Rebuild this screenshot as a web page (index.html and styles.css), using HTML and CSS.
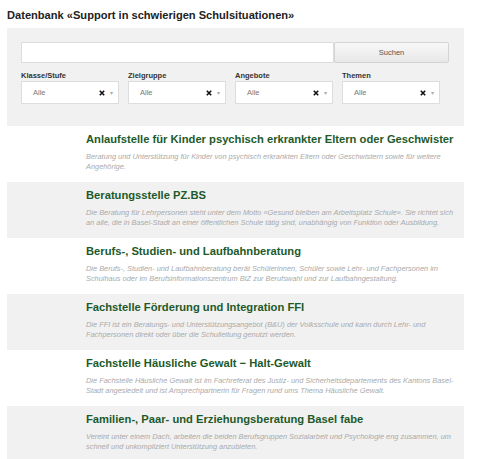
FILE: index.html
```html
<!DOCTYPE html>
<html lang="de">

<head>
    <meta charset="UTF-8">
    <title>Datenbank Support in schwierigen Schulsituationen</title>
    <link rel="stylesheet" href="styles.css">
</head>

<body>
    <div class="page">
        <h1>Datenbank «Support in schwierigen Schulsituationen»</h1>

        <div class="filter-panel">
            <div class="search-row">
                <input type="text" class="search-input">
                <button class="search-btn">Suchen</button>
            </div>

            <div class="filter-row">
                <div class="filter">
                    <label>Klasse/Stufe</label>
                    <div class="select">
                        <span class="value">Alle</span>
                        <svg class="clear" width="6" height="6" viewBox="0 0 6 6"><path d="M0.8 0.8L5.2 5.2M5.2 0.8L0.8 5.2" /></svg>
                        <span class="arrow">&#9662;</span>
                    </div>
                </div>
                <div class="filter">
                    <label>Zielgruppe</label>
                    <div class="select">
                        <span class="value">Alle</span>
                        <svg class="clear" width="6" height="6" viewBox="0 0 6 6"><path d="M0.8 0.8L5.2 5.2M5.2 0.8L0.8 5.2" /></svg>
                        <span class="arrow">&#9662;</span>
                    </div>
                </div>
                <div class="filter">
                    <label>Angebote</label>
                    <div class="select">
                        <span class="value">Alle</span>
                        <svg class="clear" width="6" height="6" viewBox="0 0 6 6"><path d="M0.8 0.8L5.2 5.2M5.2 0.8L0.8 5.2" /></svg>
                        <span class="arrow">&#9662;</span>
                    </div>
                </div>
                <div class="filter">
                    <label>Themen</label>
                    <div class="select">
                        <span class="value">Alle</span>
                        <svg class="clear" width="6" height="6" viewBox="0 0 6 6"><path d="M0.8 0.8L5.2 5.2M5.2 0.8L0.8 5.2" /></svg>
                        <span class="arrow">&#9662;</span>
                    </div>
                </div>
            </div>
        </div>

        <ul class="results">
            <li class="entry">
                <h2>Anlaufstelle für Kinder psychisch erkrankter Eltern oder Geschwister</h2>
                <p>Beratung und Unterstützung für Kinder von psychisch erkrankten Eltern oder Geschwistern sowie für weitere Angehörige.</p>
            </li>
            <li class="entry">
                <h2>Beratungsstelle PZ.BS</h2>
                <p>Die Beratung für Lehrpersonen steht unter dem Motto «Gesund bleiben am Arbeitsplatz Schule». Sie richtet sich an alle, die in Basel-Stadt an einer öffentlichen Schule tätig sind, unabhängig von Funktion oder Ausbildung.</p>
            </li>
            <li class="entry">
                <h2>Berufs-, Studien- und Laufbahnberatung</h2>
                <p>Die Berufs-, Studien- und Laufbahnberatung berät Schülerinnen, Schüler sowie Lehr- und Fachpersonen im Schulhaus oder im Berufsinformationszentrum BIZ zur Berufswahl und zur Laufbahngestaltung.</p>
            </li>
            <li class="entry">
                <h2>Fachstelle Förderung und Integration FFI</h2>
                <p>Die FFI ist ein Beratungs- und Unterstützungsangebot (B&amp;U) der Volksschule und kann durch Lehr- und Fachpersonen direkt oder über die Schulleitung genutzt werden.</p>
            </li>
            <li class="entry">
                <h2>Fachstelle Häusliche Gewalt − Halt-Gewalt</h2>
                <p>Die Fachstelle Häusliche Gewalt ist im Fachreferat des Justiz- und Sicherheitsdepartements des Kantons Basel-Stadt angesiedelt und ist Ansprechpartnerin für Fragen rund ums Thema Häusliche Gewalt.</p>
            </li>
            <li class="entry">
                <h2>Familien-, Paar- und Erziehungsberatung Basel fabe</h2>
                <p>Vereint unter einem Dach, arbeiten die beiden Berufsgruppen Sozialarbeit und Psychologie eng zusammen, um schnell und unkompliziert Unterstützung anzubieten.</p>
            </li>
        </ul>
    </div>
</body>

</html>
```

FILE: styles.css
```css
body {
    margin: 0;
    font-family: "Liberation Sans", Arial, sans-serif;
    background-color: white;
}

.page {
    width: 457px;
    padding-left: 7px;
}

h1 {
    font-size: 11.1px;
    line-height: 14px;
    color: #222;
    margin: 0;
    padding-top: 8px;
    height: 20px;
}

.filter-panel {
    background-color: #f1f1f1;
    padding: 14px 15px 22px 14px;
}

.search-row {
    display: flex;
}

.search-input {
    flex: 1;
    height: 21px;
    box-sizing: border-box;
    border: 1px solid #ddd;
    background: white;
    margin: 0;
}

.search-btn {
    width: 115px;
    height: 21px;
    margin: 0;
    box-sizing: border-box;
    border: 1px solid #d4d4d4;
    border-radius: 2px;
    background: linear-gradient(#f8f8f8, #e8e8e8);
    font-family: "Liberation Sans", Arial, sans-serif;
    font-size: 7.5px;
    color: #555;
}

.filter-row {
    display: flex;
    gap: 9px;
    margin-top: 8px;
}

.filter {
    width: 98px;
}

.filter label {
    display: block;
    font-size: 7.5px;
    font-weight: bold;
    color: #333;
    line-height: 10px;
}

.select {
    display: flex;
    align-items: center;
    height: 23px;
    box-sizing: border-box;
    border: 1px solid #ddd;
    background: white;
    padding-left: 11px;
    padding-right: 5px;
    font-size: 7.5px;
    color: #777;
}

.select .value {
    flex: 1;
}

.select .clear {
    stroke: #111;
    stroke-width: 1.6;
    margin-right: 5px;
}

.select .arrow {
    color: #aaa;
    font-size: 6px;
}

.results {
    list-style: none;
    margin: 0;
    padding: 0;
}

.entry {
    height: 56px;
    box-sizing: border-box;
    padding: 5px 4px 0 79px;
}

.entry:nth-child(even) {
    background-color: #f1f1f1;
}

.entry h2 {
    margin: 0;
    font-size: 11.2px;
    line-height: 16px;
    color: #1d5a2a;
    white-space: nowrap;
}

.entry p {
    margin: 5px 0 0 0;
    font-size: 7.4px;
    line-height: 10px;
    font-style: italic;
    color: #aaa;
}
```
